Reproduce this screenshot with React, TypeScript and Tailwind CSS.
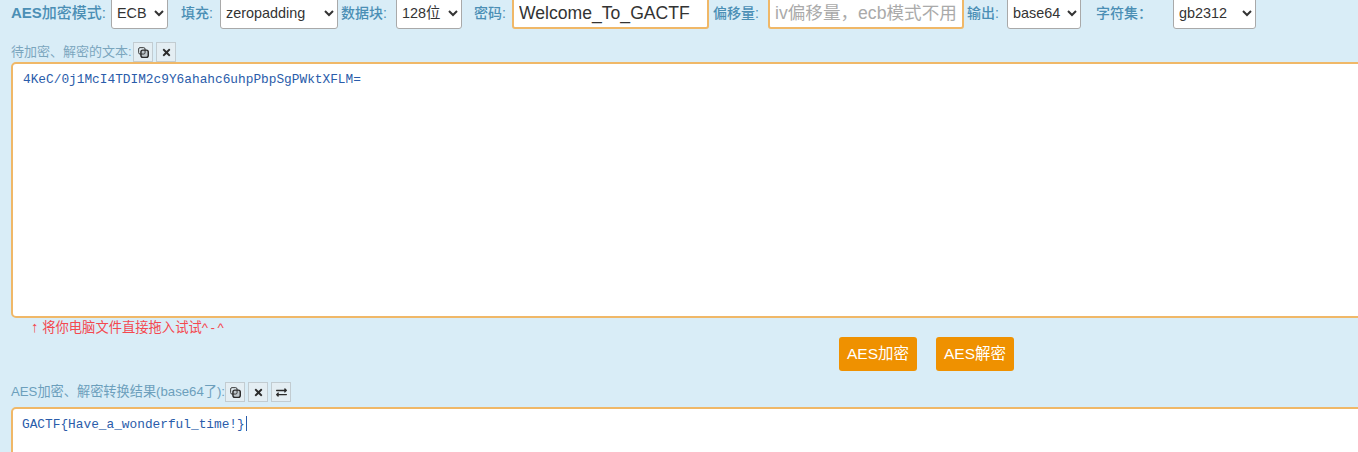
import { FaTimes, FaExchangeAlt } from "react-icons/fa";

const font = "font-['Liberation_Sans','Noto_Sans_CJK_SC',sans-serif]";

const CopyIcon = () => (
  <svg viewBox="0 0 12 12" className="w-[11px] h-[11px]" fill="none" stroke="#2b2b2b">
    <rect x="0.7" y="0.7" width="7" height="7" rx="1.5" strokeWidth="1" />
    <rect x="3.2" y="3.4" width="8" height="8" rx="2" fill="#2b2b2b" fillOpacity="0.2" strokeWidth="1.6" />
  </svg>
);

const IconButton = ({ children }: { children: React.ReactNode }) => (
  <button className="flex items-center justify-center w-5 h-5 border border-[#c2ccd1] bg-[#e4eef3] text-[#2b2b2b] text-[11px]">
    {children}
  </button>
);

const Label = ({ text, className }: { text: string; className: string }) => (
  <span className={`text-sm font-medium text-[#4b8fb5] whitespace-nowrap ${className}`}>{text}</span>
);

const Picker = ({ value, className }: { value: string; className: string }) => (
  <select
    defaultValue={value}
    className={`h-8 bg-white border border-[#a9a9a9] rounded-[3px] text-[14.4px] text-[#333] pl-px ${className}`}
  >
    <option>{value}</option>
  </select>
);

export default function App() {
  return (
    <div className={`h-screen overflow-hidden bg-[#d9edf7] ${font}`}>
      <div className="flex items-center h-8 -mt-[3px] w-[1358px]">
        <span className="ml-[11px] w-[100px] text-[15px] font-medium text-[#4b8fb5] whitespace-nowrap">
          <b>AES</b>加密模式:
        </span>
        <Picker value="ECB" className="w-[57px]" />
        <Label text="填充:" className="ml-[13px] w-[39px]" />
        <Picker value="zeropadding" className="w-[118px]" />
        <Label text="数据块:" className="ml-[3px] w-[55px]" />
        <Picker value="128位" className="w-[66px]" />
        <Label text="密码:" className="ml-3 w-[38px]" />
        <input
          defaultValue="Welcome_To_GACTF"
          className="w-[197px] h-[32px] px-[5px] bg-white border-2 border-[#f0b868] rounded-[3px] text-[17.6px] text-[#333] outline-none"
        />
        <Label text="偏移量:" className="ml-1 w-[55px]" />
        <input
          placeholder="iv偏移量，ecb模式不用"
          className="w-[196px] h-[32px] px-[5px] bg-white border-2 border-[#f0b868] rounded-[3px] text-[17.6px] outline-none placeholder:text-[#aaa]"
        />
        <Label text="输出:" className="ml-[3px] w-[40px]" />
        <Picker value="base64" className="w-[74px]" />
        <Label text="字符集：" className="ml-[15px] w-[77px]" />
        <Picker value="gb2312" className="w-[83px]" />
      </div>

      <div className="flex items-center h-5 mt-[13px] ml-[11px]">
        <span className="text-[13px] text-[#7ba6be] w-[122px] whitespace-nowrap">待加密、解密的文本:</span>
        <div className="flex gap-[3px]">
          <IconButton><CopyIcon /></IconButton>
          <IconButton><FaTimes /></IconButton>
        </div>
      </div>

      <div className="w-[1400px] h-[256px] ml-[11px] px-[10px] py-[6px] bg-white border-2 border-[#f0b868] rounded-[5px] font-['Liberation_Mono',monospace] text-[12.8px] text-[#2a5caa]">
        4KeC/0j1McI4TDIM2c9Y6ahahc6uhpPbpSgPWktXFLM=
      </div>

      <p className="ml-[31px] mt-[1px] text-[13.3px] leading-4 text-[#f4484f]">
        <b className="text-[15px] leading-4">↑</b> 将你电脑文件直接拖入试试<span className="tracking-[2.5px]">^-^</span>
      </p>

      <div className="flex gap-[19px] ml-[839px] mt-[1px]">
        <button className="w-[78px] h-[34px] bg-[#ef9100] rounded-[3px] text-[15.5px] text-white">AES加密</button>
        <button className="w-[78px] h-[34px] bg-[#ef9100] rounded-[3px] text-[15.5px] text-white">AES解密</button>
      </div>

      <div className="flex items-center h-5 mt-[11px] ml-[11px]">
        <span className="text-[13.2px] text-[#6c9fbc] w-[214px] whitespace-nowrap">AES加密、解密转换结果(base64了):</span>
        <div className="flex gap-[3px]">
          <IconButton><CopyIcon /></IconButton>
          <IconButton><FaTimes /></IconButton>
          <IconButton><FaExchangeAlt /></IconButton>
        </div>
      </div>

      <div className="w-[1400px] h-[100px] mt-[5px] ml-[11px] px-[9px] py-[6px] bg-white border-2 border-[#f0b868] rounded-[5px] font-['Liberation_Mono',monospace] text-[12.8px] text-[#2a5caa]">
        GACTF{"{"}Have_a_wonderful_time!{"}"}
        <span className="inline-block w-px h-[15px] ml-px align-[-3px] bg-[#2a5caa]" />
      </div>
    </div>
  );
}
